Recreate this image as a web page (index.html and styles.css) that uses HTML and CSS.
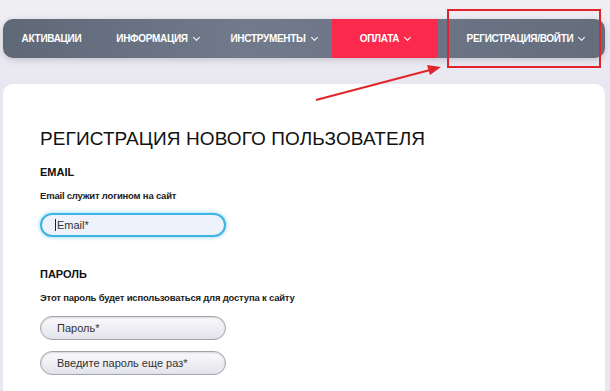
FILE: index.html
```html
<!DOCTYPE html>
<html lang="ru">
<head>
  <meta charset="UTF-8" />
  <meta name="viewport" content="width=device-width, initial-scale=1.0"/>
  <title>Регистрация</title>
  <link rel="stylesheet" href="styles.css">
</head>
<body>
  <nav class="menu">
    <a class="item item-first">АКТИВАЦИИ</a>
    <a class="item">ИНФОРМАЦИЯ <span class="chev"></span></a>
    <a class="item">ИНСТРУМЕНТЫ <span class="chev"></span></a>
    <a class="item item-pay">ОПЛАТА <span class="chev"></span></a>
    <a class="item item-reg">РЕГИСТРАЦИЯ/ВОЙТИ <span class="chev"></span></a>
  </nav>

  <div class="card">
    <h1>РЕГИСТРАЦИЯ НОВОГО ПОЛЬЗОВАТЕЛЯ</h1>
    <h3>EMAIL</h3>
    <p class="hint">Email служит логином на сайт</p>
    <div class="field field-focus"><span class="caret"></span>Email*</div>

    <h3 class="gap">ПАРОЛЬ</h3>
    <p class="hint">Этот пароль будет использоваться для доступа к сайту</p>
    <div class="field">Пароль*</div>
    <div class="field">Введите пароль еще раз*</div>
  </div>

  <div class="mark"></div>
  <svg class="arrow" width="140" height="45" viewBox="0 0 140 45">
    <line x1="6" y1="38" x2="120" y2="8" stroke="#e0262a" stroke-width="2.2"/>
    <polygon points="131,5 117,3 120,13" fill="#e0262a"/>
  </svg>
</body>
</html>
```

FILE: styles.css
```css
*{margin:0;padding:0;box-sizing:border-box;}
body{background:linear-gradient(#efeef2 0,#ebeaf1 60px,#e8e7f1 90px);font-family:'Liberation Sans',Arial,sans-serif;color:#111;padding:19px 5px 0 3px;height:391px;overflow:hidden;position:relative;}
.menu{display:flex;height:39px;border-radius:10px;background:linear-gradient(90deg,#5f6877,#717a8b 40%,#6c7585 70%,#646d7c);box-shadow:0 2px 6px rgba(80,80,110,0.25);}
.item{display:flex;align-items:center;justify-content:center;color:#fff;font-size:10px;font-weight:bold;letter-spacing:-0.3px;height:100%;white-space:nowrap;}
.item-first{width:95px;padding-left:2px;}
.item:nth-child(2){width:115px;padding-left:4px;}
.item:nth-child(3){width:119px;padding-left:2px;}
.item-pay{width:106px;background:#fb2a4c;}
.item-reg{flex:1;padding-left:8px;}
.chev{display:inline-block;width:5px;height:5px;border-right:1.5px solid #fff;border-bottom:1.5px solid #fff;transform:rotate(45deg);margin:-3px 0 0 6px;}
.card{background:#fff;border-radius:10px 10px 0 0;margin-top:26px;height:320px;padding:44px 0 0 37px;}
h1{font-size:19px;font-weight:normal;letter-spacing:0.1px;color:#111;}
h3{font-size:11px;font-weight:bold;margin-top:16px;}
h3.gap{margin-top:31px;}
.hint{font-size:9.5px;font-weight:bold;letter-spacing:-0.2px;margin-top:12px;color:#222;}
.field{width:186px;height:24px;border-radius:12px;margin-top:13px;border:1px solid #a3a3ad;background:linear-gradient(#fbfbfd,#e2e2ea);box-shadow:inset 0 1px 2px rgba(0,0,0,0.15);font-size:11px;color:#333;padding-left:16px;display:flex;align-items:center;}
.field + .field{margin-top:11px;}
.field-focus{border:2px solid #3db3e6;background:#eef2fa;box-shadow:0 0 4px rgba(61,179,230,0.6);margin-top:12px;padding-left:13px;}
.caret{width:1px;height:12px;background:#222;margin-right:1px;}
.mark{position:absolute;left:447px;top:9px;width:154px;height:59px;border:2px solid #e3232b;}
.arrow{position:absolute;left:310px;top:62px;}
```
